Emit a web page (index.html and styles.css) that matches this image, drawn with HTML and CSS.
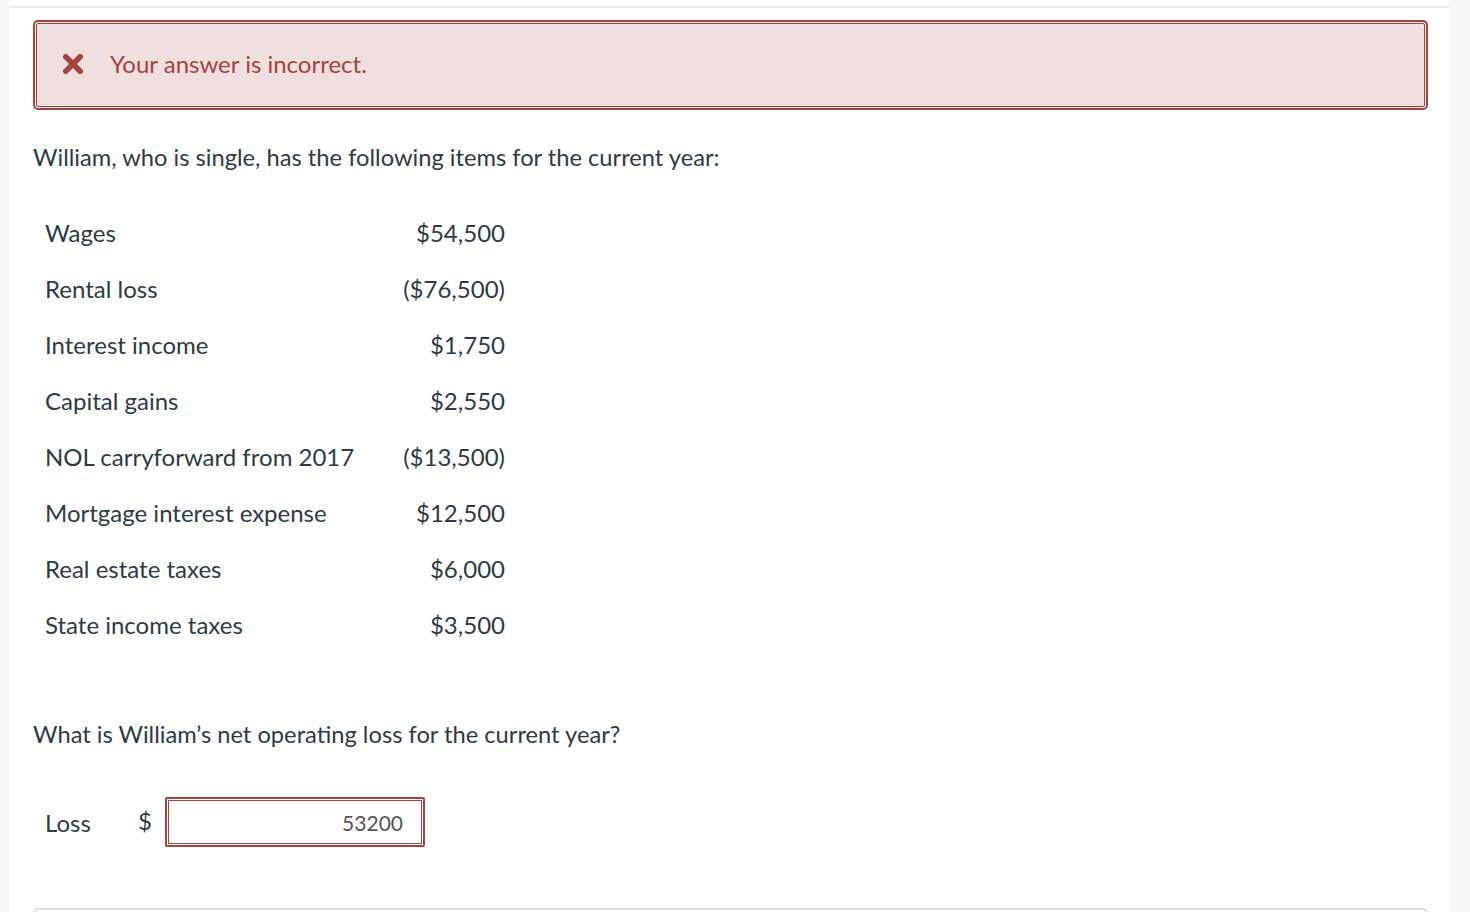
FILE: index.html
```html
<!DOCTYPE html>
<html lang="en">
<head>
<meta charset="utf-8">
<title>Question</title>
<link rel="stylesheet" href="styles.css">
</head>
<body>
<div class="page">
  <div class="topline"></div>
  <div class="content">
    <div class="banner">
      <div class="banner-inner">
        <svg class="x-icon" width="22" height="22" viewBox="0 0 22 22" aria-hidden="true">
          <path d="M3.8 3.8 L18.2 18.2 M18.2 3.8 L3.8 18.2" stroke="#a5443f" stroke-width="5.6" stroke-linecap="round" fill="none"/>
        </svg>
        <span class="banner-text">Your answer is incorrect.</span>
      </div>
    </div>

    <p class="question">William, who is single, has the following items for the current year:</p>

    <div class="items">
      <div class="row"><span class="label">Wages</span><span class="value">$54,500</span></div>
      <div class="row"><span class="label">Rental loss</span><span class="value">($76,500)</span></div>
      <div class="row"><span class="label">Interest income</span><span class="value">$1,750</span></div>
      <div class="row"><span class="label">Capital gains</span><span class="value">$2,550</span></div>
      <div class="row"><span class="label">NOL carryforward from 2017</span><span class="value">($13,500)</span></div>
      <div class="row"><span class="label">Mortgage interest expense</span><span class="value">$12,500</span></div>
      <div class="row"><span class="label">Real estate taxes</span><span class="value">$6,000</span></div>
      <div class="row"><span class="label">State income taxes</span><span class="value">$3,500</span></div>
    </div>

    <p class="question q2">What is William’s net operating loss for the current year?</p>

    <div class="answer">
      <span class="answer-label">Loss</span>
      <span class="currency">$</span>
      <div class="input-outer">
        <div class="input-inner">53200</div>
      </div>
    </div>

    <div class="next-card"></div>
  </div>
</div>
</body>
</html>
```

FILE: styles.css
```css
html, body {
  margin: 0;
  padding: 0;
}
body {
  background: #f8f8f8;
  font-family: Lato, "Open Sans", sans-serif;
  color: #2d3b45;
}
.page {
  margin-left: 10px;
  width: 1440px;
  height: 912px;
  overflow: hidden;
  background: #ffffff;
  padding-top: 6px;
  box-sizing: border-box;
}
.topline {
  height: 2px;
  background: #ebebeb;
}
.content {
  padding: 0 22px 0 23px;
}
.banner {
  margin-top: 12px;
  border: 2px solid #a5443f;
  border-radius: 5px;
  padding: 1px;
  background: #f7eded;
}
.banner-inner {
  border: 1px solid #a5443f;
  border-radius: 2px;
  background: #f0dfdf;
  height: 84px;
  box-sizing: border-box;
  display: flex;
  align-items: center;
  padding-left: 25px;
  padding-bottom: 3px;
}
.x-icon {
  display: block;
  margin-right: 26px;
  margin-top: 0;
}
.banner-text {
  color: #a5443f;
  font-size: 24px;
  line-height: 32px;
}
.question {
  margin: 31px 0 0 0;
  font-size: 23.7px;
  line-height: 32px;
}
.items {
  margin-top: 31px;
  padding-left: 12px;
}
.row {
  display: grid;
  grid-template-columns: 340px 120px;
  height: 56px;
  align-items: center;
  font-size: 24px;
}
.value {
  text-align: right;
}
.q2 {
  margin-top: 66px;
}
.answer {
  margin-top: 47px;
  padding-left: 12px;
  display: flex;
  align-items: center;
  font-size: 24px;
}
.answer-label {
  width: 93px;
}
.currency {
  width: 27px;
  margin-top: -4px;
}
.input-outer {
  border: 2px solid #a5443f;
  border-radius: 2px;
  padding: 1px;
  width: 260px;
  height: 50px;
  box-sizing: border-box;
  background: #ffffff;
}
.input-inner {
  border: 1px solid #a5443f;
  height: 100%;
  box-sizing: border-box;
  display: flex;
  align-items: center;
  justify-content: flex-end;
  padding-right: 18px;
  font-size: 21px;
  color: #555555;
}
.next-card {
  margin-top: 61px;
  height: 40px;
  border: 2px solid #dedede;
  border-radius: 5px;
}
```
